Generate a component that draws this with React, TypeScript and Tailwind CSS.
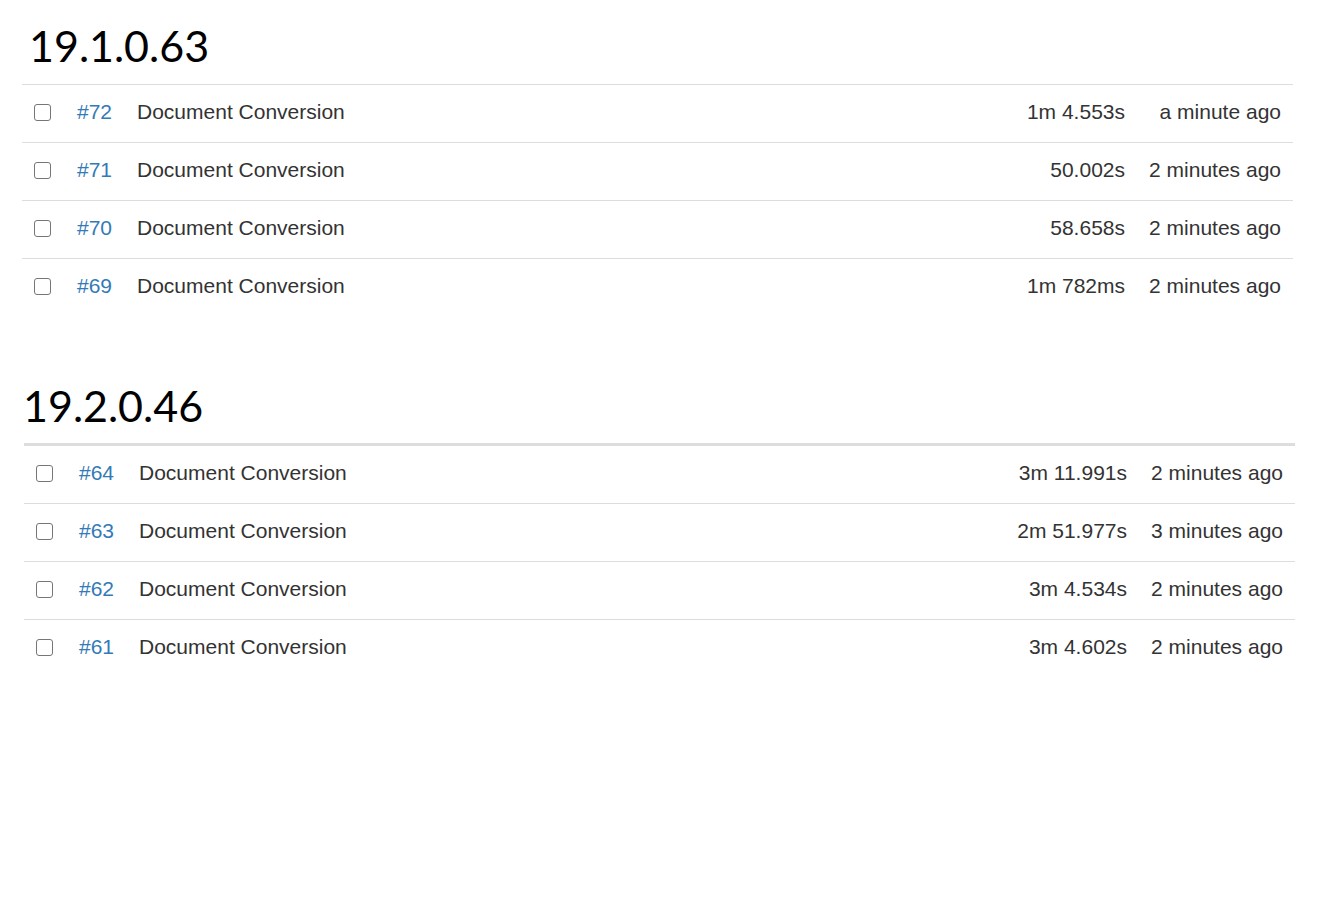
const builds = [
  {
    version: "19.1.0.63",
    rows: [
      { id: 72, name: "Document Conversion", duration: "1m 4.553s", when: "a minute ago" },
      { id: 71, name: "Document Conversion", duration: "50.002s", when: "2 minutes ago" },
      { id: 70, name: "Document Conversion", duration: "58.658s", when: "2 minutes ago" },
      { id: 69, name: "Document Conversion", duration: "1m 782ms", when: "2 minutes ago" },
    ],
  },
  {
    version: "19.2.0.46",
    rows: [
      { id: 64, name: "Document Conversion", duration: "3m 11.991s", when: "2 minutes ago" },
      { id: 63, name: "Document Conversion", duration: "2m 51.977s", when: "3 minutes ago" },
      { id: 62, name: "Document Conversion", duration: "3m 4.534s", when: "2 minutes ago" },
      { id: 61, name: "Document Conversion", duration: "3m 4.602s", when: "2 minutes ago" },
    ],
  },
];

type Row = (typeof builds)[number]["rows"][number];

function BuildRow({ row }: { row: Row }) {
  return (
    <div className="flex h-[58px] first:h-[57px] items-center pb-[3px] border-t border-[#dddddd] first:border-t-0 leading-[30px]">
      <div className="w-[55px] pl-3 flex items-center">
        <span className="block w-[17px] h-[17px] rounded-[3px] border-[1.5px] border-[#767676] bg-white" />
      </div>
      <a href="#" className="w-[60px] text-[#337ab7]">
        #{row.id}
      </a>
      <div className="flex-1 text-[#333333]">{row.name}</div>
      <div className="pr-3 text-right text-[#333333]">{row.duration}</div>
      <div className="w-[156px] pr-3 text-right text-[#333333]">{row.when}</div>
    </div>
  );
}

export default function App() {
  return (
    <div className="min-h-screen bg-white" style={{ fontFamily: '"Liberation Sans", Arial, sans-serif' }}>
      {/* first build */}
      <section className="ml-[22px] w-[1271px] pt-[23px]">
        <h2 className="pl-[7px] h-[46px] mb-[15px] text-[43px] leading-[46px] text-black font-['Lato',sans-serif]">
          {builds[0].version}
        </h2>
        <div className="border-t border-[#dddddd] text-[21px]">
          {builds[0].rows.map((r) => (
            <BuildRow key={r.id} row={r} />
          ))}
        </div>
      </section>

      {/* second build */}
      <section className="ml-[24px] w-[1271px] mt-[67px]">
        <h2 className="-ml-[1px] h-[46px] mb-[14px] text-[43px] leading-[46px] text-black font-['Lato',sans-serif]">
          {builds[1].version}
        </h2>
        <div className="border-t-[3px] border-[#dddddd] text-[21px]">
          {builds[1].rows.map((r) => (
            <BuildRow key={r.id} row={r} />
          ))}
        </div>
      </section>
    </div>
  );
}
